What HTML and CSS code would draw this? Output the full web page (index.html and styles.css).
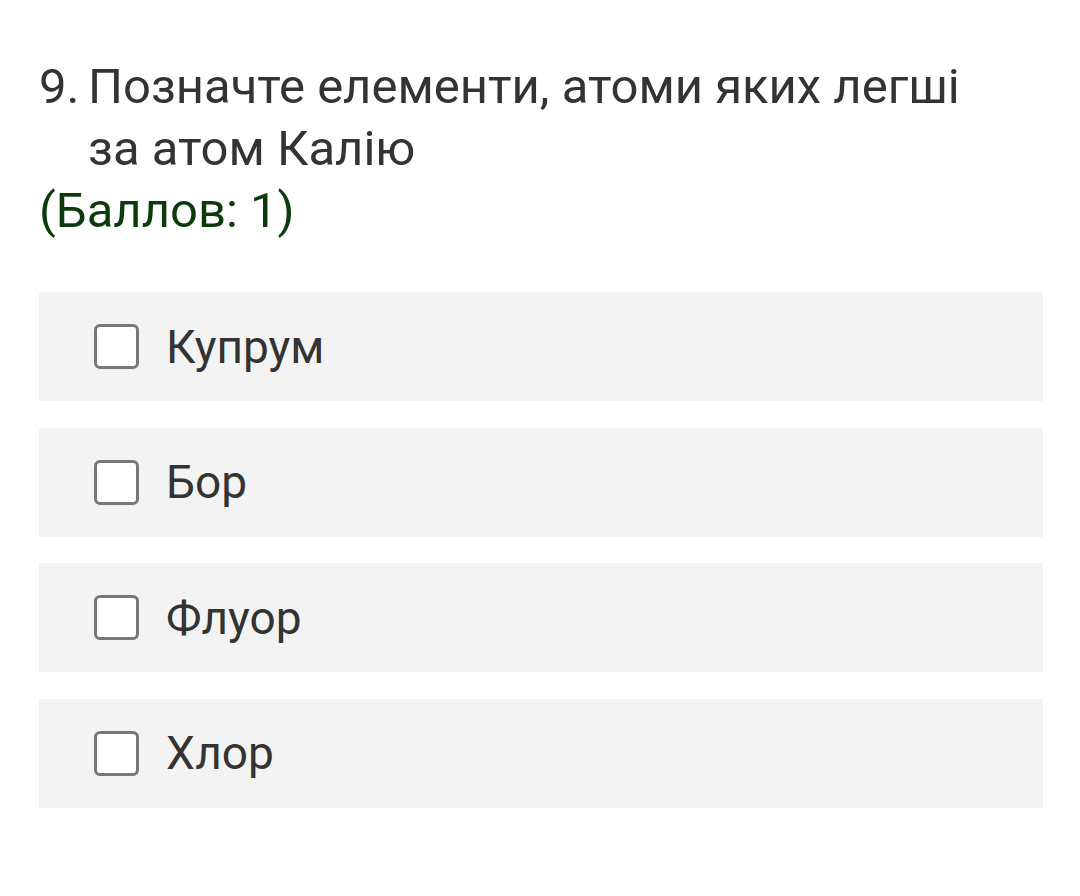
FILE: index.html
```html
<!DOCTYPE html>
<html lang="uk">
<head>
<meta charset="utf-8">
<link rel="stylesheet" href="styles.css">
</head>
<body>
<div class="page">
  <div class="question">
    <div class="title">
      <span class="num">9.</span>
      <span class="text">Позначте елементи, атоми яких легші за атом Калію</span>
    </div>
    <div class="points">(Баллов: 1)</div>
  </div>
  <div class="options">
    <label class="option"><span class="box"></span><span class="label">Купрум</span></label>
    <label class="option"><span class="box"></span><span class="label">Бор</span></label>
    <label class="option"><span class="box"></span><span class="label">Флуор</span></label>
    <label class="option"><span class="box"></span><span class="label">Хлор</span></label>
  </div>
</div>
</body>
</html>
```

FILE: styles.css
```css
html, body {
  margin: 0;
  padding: 0;
  background: #ffffff;
}
.page {
  padding: 56px 37px 0 39px;
  font-family: Roboto, "Noto Sans", sans-serif;
  color: #333333;
}
.title {
  display: flex;
  font-size: 49px;
  line-height: 62px;
}
.num {
  flex: 0 0 49px;
}
.text {
  flex: 1;
  padding-right: 60px;
}
.points {
  font-size: 49px;
  line-height: 62px;
  color: #0b3a0b;
}
.options {
  margin-top: 50px;
  display: flex;
  flex-direction: column;
  gap: 26.5px;
}
.option {
  display: flex;
  align-items: center;
  height: 109px;
  background: #f3f3f3;
  padding-left: 55px;
}
.box {
  width: 39px;
  height: 39px;
  border: 3px solid #777777;
  border-radius: 6px;
  background: #ffffff;
  flex: 0 0 auto;
}
.label {
  margin-left: 27px;
  font-size: 46px;
  color: #333333;
}
```
